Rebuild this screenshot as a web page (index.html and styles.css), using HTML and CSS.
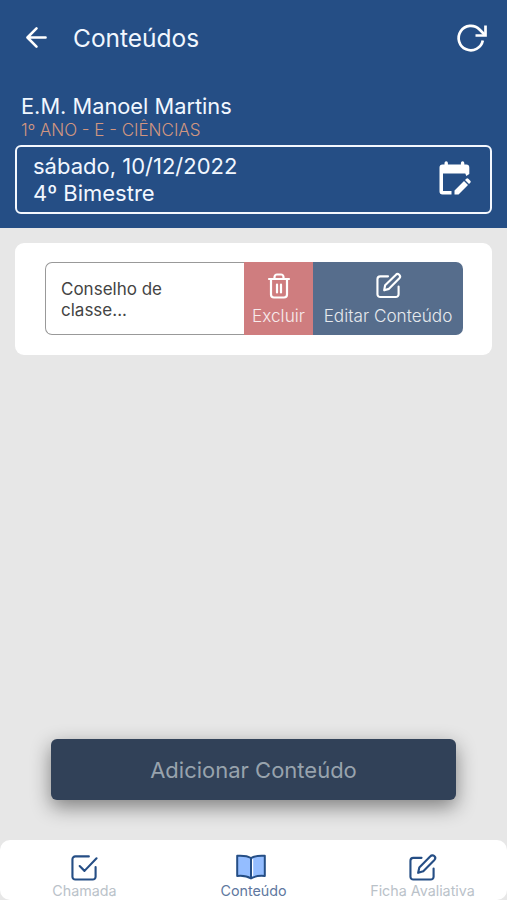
FILE: index.html
```html
<!DOCTYPE html>
<html lang="pt-BR">
<head>
  <meta charset="UTF-8" />
  <meta name="viewport" content="width=device-width, initial-scale=1.0"/>
  <title>Conteúdos</title>
  <link rel="stylesheet" href="styles.css">
</head>
<body>
  <header class="header">
    <div class="topbar">
      <button class="icon-btn" aria-label="Voltar">
        <svg class="icon-back" viewBox="0 0 22 22"><path d="M20.5 11H2M11 1.5L1.5 11l9.5 9.5"/></svg>
      </button>
      <h1>Conteúdos</h1>
      <button class="icon-btn refresh" aria-label="Atualizar">
        <svg class="icon-refresh" viewBox="0 0 30 28"><path d="M25.800 16.500A12.200 12.200 0 1 1 22.500 5.500L27.500 10.500"/><path d="M28.500 1.500v10H18.500"/></svg>
      </button>
    </div>
    <div class="school">E.M. Manoel Martins</div>
    <div class="group">1º ANO - E - CIÊNCIAS</div>
    <div class="date-box">
      <div>
        <div class="date">sábado, 10/12/2022</div>
        <div class="term">4º Bimestre</div>
      </div>
      <svg class="icon-calendar" viewBox="0 0 32 34">
        <path d="M3.500 3.500H5.500V2a1.700 1.700 0 0 1 3.400 0v1.500h13V2a1.700 1.700 0 0 1 3.400 0v1.500h2a3 3 0 0 1 3 3v6.500l-3 2-1-2.500H4v17.500h8.500v3.500h-9a3 3 0 0 1-3-3v-24a3 3 0 0 1 3-3z"/>
        <path d="M15.500 33.500v-4l9.500-9.500 4 4-9.500 9.500zM26 19l1.300-1.300a1.400 1.400 0 0 1 2 0l2 2a1.400 1.400 0 0 1 0 2L30 23z"/>
      </svg>
    </div>
  </header>

  <main class="main">
    <div class="card">
      <div class="item">
        <div class="item-text">Conselho de classe...</div>
        <button class="item-btn delete">
          <svg class="icon-trash" viewBox="0 0 22 26"><path d="M1 6h20M3 6v15.500a3 3 0 0 0 3 3h10a3 3 0 0 0 3-3V6M6.500 6V4a2.500 2.500 0 0 1 2.500-2.500h4A2.500 2.500 0 0 1 15.500 4v2M9 11.500v8M13 11.500v8"/></svg>
          <span>Excluir</span>
        </button>
        <button class="item-btn edit">
          <svg class="icon-edit" viewBox="0 0 26 26"><path d="M12.500 3.500H4.500a3 3 0 0 0-3 3v15.500a3 3 0 0 0 3 3h16a3 3 0 0 0 3-3v-8"/><path d="M20.500 2a2.500 2.500 0 0 1 3.800 3.500L13.500 16.500 8.500 18l1-5.200z"/></svg>
          <span>Editar Conteúdo</span>
        </button>
      </div>
    </div>
    <button class="add-btn">Adicionar Conteúdo</button>
  </main>

  <nav class="tabs">
    <a class="tab">
      <svg class="icon-check" viewBox="0 0 28 28"><path d="M18.500 2.500H4.500a3 3 0 0 0-3 3v18a3 3 0 0 0 3 3h18a3 3 0 0 0 3-3V13.500M9 12.500l5 5L26.500 4.500"/></svg>
      <span>Chamada</span>
    </a>
    <a class="tab active">
      <svg class="icon-book" viewBox="0 0 30 26"><path d="M15 4C11 1.500 6 1.500 1.200 1.800V22c5-.5 9.800 0 13.800 2.500C19 22 23.800 21.500 28.800 22V1.800C24 1.500 19 1.500 15 4z"/><path class="spine" d="M15 4v20"/><path class="page" d="M16.600 5.500v16"/></svg>
      <span>Conteúdo</span>
    </a>
    <a class="tab">
      <svg class="icon-sheet" viewBox="0 0 28 28"><path d="M13 4H4.500a3 3 0 0 0-3 3v16.500a3 3 0 0 0 3 3h18a3 3 0 0 0 3-3V15"/><path d="M22.200 2.300a2.700 2.700 0 0 1 4.200 3.800L14.800 17.800 9.500 19.500l1.200-5.500z"/></svg>
      <span>Ficha Avaliativa</span>
    </a>
  </nav>
</body>
</html>
```

FILE: styles.css
```css
* {
  box-sizing: border-box;
}
body {
  font-family: Inter, sans-serif;
  background: #e7e7e7;
  margin: 0;
  height: 900px;
  display: flex;
  flex-direction: column;
  overflow: hidden;
}
button {
  font-family: inherit;
  border: none;
  padding: 0;
  cursor: pointer;
}
svg {
  display: block;
  overflow: visible;
  fill: none;
  stroke: currentColor;
  stroke-width: 2.2;
  stroke-linecap: round;
  stroke-linejoin: round;
}
.header {
  height: 228px;
  background: #254e85;
  color: #f1f7ff;
  padding: 0 15px;
}
.topbar {
  height: 75px;
  display: flex;
  align-items: center;
  padding: 0 5px 0 11px;
}
.icon-btn {
  background: none;
  color: #fff;
}
.icon-back {
  width: 21px;
  height: 21px;
  stroke-width: 2.7;
}
h1 {
  margin: 0 0 0 26px;
  font-size: 24.5px;
  font-weight: 400;
}
.refresh {
  margin-left: auto;
}
.icon-refresh {
  width: 30px;
  height: 28px;
  stroke-width: 2.7;
  stroke-linecap: butt;
  stroke-linejoin: miter;
}
.school {
  margin-top: 18px;
  padding-left: 6px;
  font-size: 21.8px;
  line-height: 27px;
}
.group {
  padding-left: 6px;
  font-size: 17px;
  font-weight: 300;
  line-height: 20px;
  color: #d29680;
}
.date-box {
  height: 69px;
  margin-top: 5px;
  padding: 0 19px 0 16px;
  border: 2px solid #f4f8ff;
  border-radius: 6px;
  display: flex;
  align-items: center;
  justify-content: space-between;
  font-size: 22px;
  line-height: 27px;
}
.icon-calendar {
  width: 32px;
  height: 34px;
  margin-bottom: 4px;
  fill: #fff;
  stroke: none;
}
.main {
  flex: 1;
  display: flex;
  flex-direction: column;
  padding: 15px 15px 40px;
}
.card {
  background: #fff;
  border-radius: 9px;
  padding: 19px 29px 20px 30px;
}
.item {
  height: 73px;
  display: flex;
}
.item-text {
  flex: 1;
  padding: 16px 50px 0 15px;
  border: 1px solid #999;
  border-right: none;
  border-radius: 7px 0 0 7px;
  font-size: 17px;
  line-height: 21px;
  color: #444;
}
.item-btn {
  display: flex;
  flex-direction: column;
  align-items: center;
  padding-top: 11px;
  font-size: 17.2px;
  line-height: 20px;
  font-weight: 300;
  color: #fff;
}
.item-btn span {
  opacity: .85;
}
.delete {
  width: 69px;
  background: #cf7d7f;
}
.edit {
  width: 150px;
  background: #566d8c;
  border-radius: 0 7px 7px 0;
}
.icon-trash {
  width: 22px;
  height: 26px;
  margin-bottom: 7px;
}
.icon-edit {
  width: 25px;
  height: 25px;
  margin-bottom: 8px;
}
.add-btn {
  height: 61px;
  margin: auto 36px 0;
  background: #314158;
  border-radius: 6px;
  box-shadow: 0 7px 20px rgba(0, 0, 0, .45);
  color: #98a3ad;
  font-size: 22px;
}
.tabs {
  height: 60px;
  background: #fff;
  border-radius: 10px;
  display: flex;
}
.tab {
  flex: 1;
  display: flex;
  flex-direction: column;
  align-items: center;
  justify-content: flex-end;
  padding-bottom: 1px;
  color: #254e85;
  font-size: 14.3px;
  line-height: 17px;
}
.tab span {
  color: #bac2c9;
}
.tab.active span {
  color: #6078a0;
}
.icon-check, .icon-sheet {
  width: 27px;
  height: 27px;
  margin-bottom: 1px;
}
.icon-book {
  width: 30px;
  height: 26px;
  margin: 0 5px 2px 0;
  fill: #94bdff;
  stroke-width: 2;
}
.icon-book .page {
  stroke: #fff;
  stroke-width: 1.2;
}
```
